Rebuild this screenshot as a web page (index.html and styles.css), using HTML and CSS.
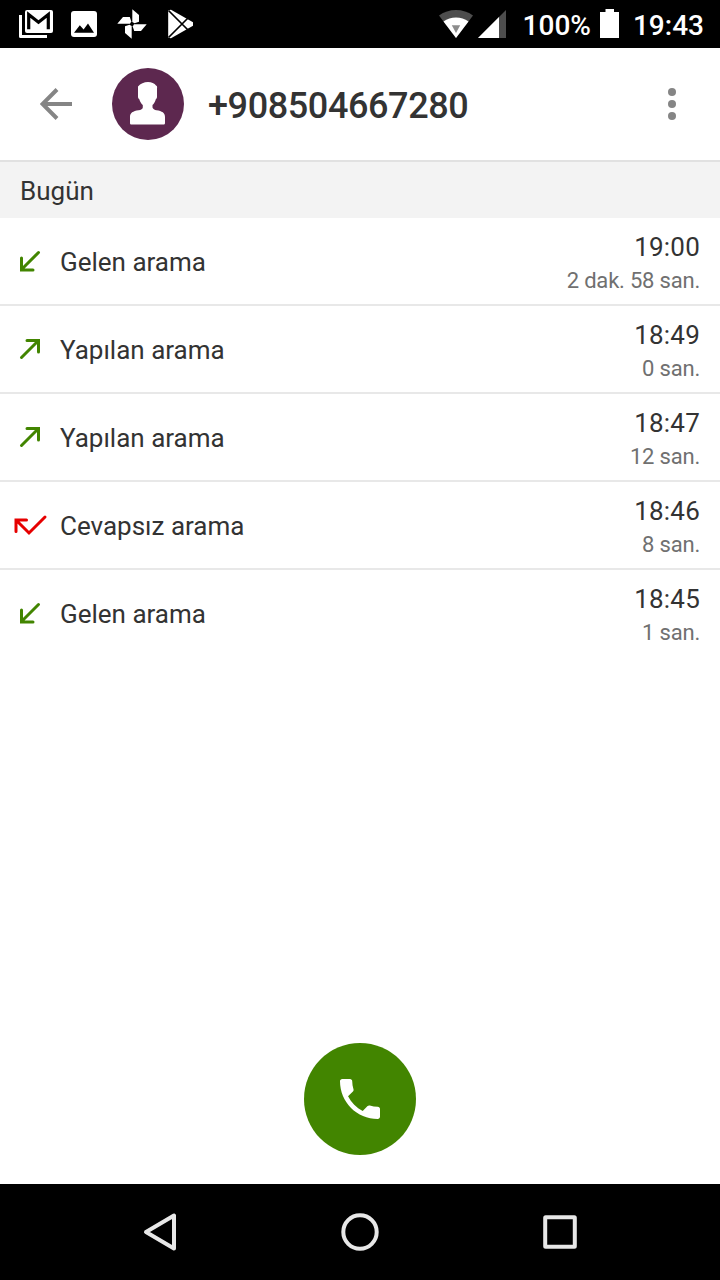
FILE: index.html
```html
<!DOCTYPE html>
<html lang="tr">
<head>
    <meta charset="UTF-8">
    <title>Arama geçmişi</title>
    <link rel="stylesheet" href="styles.css">
</head>
<body>
    <div class="status-bar">
        <div class="notifications">
            <svg width="48" height="48" viewBox="0 0 48 48">
                <path d="M8.5 15V36.5H35" fill="none" stroke="#fff" stroke-width="3" stroke-linejoin="round"/>
                <rect x="13" y="10" width="28" height="23" rx="2" fill="#fff"/>
                <path d="M16.7 29.3V14.6L26.5 22.2L36.3 14.6V29.3" fill="none" stroke="#000" stroke-width="3.2"/>
            </svg>
            <svg width="48" height="48" viewBox="0 0 48 48">
                <rect x="11" y="11" width="26" height="26" rx="3" fill="#fff"/>
                <path d="M14 32.7L19.8 25.3L23.6 29.6L28 23.5L34 32.7Z" fill="#000"/>
            </svg>
            <svg width="48" height="48" viewBox="0 0 48 48" fill="#fff">
                <path d="M24.3 9.3L31 15V21.8L26.5 23.3L24.3 22Z"/>
                <path d="M38.7 24.3L33 31H26.2L24.7 26.5L26 24.3Z"/>
                <path d="M23.7 38.7L17 33V26.2L21.5 24.7L23.7 26Z"/>
                <path d="M9.3 23.7L15 17H21.8L23.3 21.5L22 23.7Z"/>
            </svg>
            <svg width="48" height="48" viewBox="0 0 48 48">
                <path d="M12.2 10.2L15 9.8L37 22.3V25.7L15 38.2L12.2 37.8Z" fill="#fff"/>
                <path d="M12.5 10.5L32 30M12.5 37.5L32 18" stroke="#000" stroke-width="1.7"/>
            </svg>
        </div>
        <div class="system">
            <svg class="wifi" width="34" height="48" viewBox="0 0 34 48">
                <path d="M17 38L0 15.5Q7.5 10 17 10T34 15.5Z" fill="#4d4d4d"/>
                <path d="M17 38L4.5 21.5Q10 17.4 17 17.4T29.5 21.5Z" fill="#fff"/>
                <path d="M12.8 25.2H21.2L17 33Z" fill="#8c8c8c"/>
            </svg>
            <svg class="signal" width="28" height="48" viewBox="0 0 28 48">
                <path d="M28 10V38H0Z" fill="#4d4d4d"/>
                <path d="M21 17V38H0Z" fill="#fff"/>
            </svg>
            <span class="percent">100%</span>
            <svg class="battery" width="20" height="48" viewBox="0 0 20 48">
                <path d="M5.5 9H14V12H19V38H0V12H5.5Z" fill="#fff"/>
            </svg>
            <span class="clock">19:43</span>
        </div>
    </div>

    <header>
        <svg class="back" width="32" height="32" viewBox="0 0 32 32">
            <path d="M32 16H3M17 1.5L2.5 16L17 30.5" fill="none" stroke="#858585" stroke-width="4"/>
        </svg>
        <div class="avatar">
            <svg width="72" height="72" viewBox="0 0 72 72">
                <path d="M36 14C39.5 14 42.5 15.2 44 17.5C45.3 17.8 45.2 19 45 20.5V28.5C45 30 44.6 30.6 43.8 31.2C43.2 33.5 42 35.6 40.5 37V39.5C41 41 42.5 42 44.5 42.3C50 43.2 53 44.8 53 49V55C53 56 52.4 56.6 51.4 56.6H19.6C18.6 56.6 18 56 18 55V49C18 44.8 21 43.2 26.5 42.3C29 41.9 30.8 41 30.8 39.5V37C29.3 35.6 28 33.5 27.3 31.2C26.5 30.6 26 30 26 28.5V18.5C28.5 15.5 32 14 36 14Z" fill="#fff"/>
            </svg>
        </div>
        <h1>+908504667280</h1>
        <svg class="menu" width="8" height="32" viewBox="0 0 8 32" fill="#858585">
            <circle cx="4" cy="4" r="4"/>
            <circle cx="4" cy="16" r="4"/>
            <circle cx="4" cy="28" r="4"/>
        </svg>
    </header>

    <main>
        <h2>Bugün</h2>
        <ul class="calls">
            <li>
                <svg class="incoming" viewBox="0 0 60 48"><path d="M38.5 15.5L22 32M21.5 21V33H33"/></svg>
                <span class="type">Gelen arama</span>
                <div class="info"><span class="time">19:00</span><span class="duration">2 dak. 58 san.</span></div>
            </li>
            <li>
                <svg class="outgoing" viewBox="0 0 60 48"><path d="M21.5 32.5L38 16M27 15.5H38.5V27"/></svg>
                <span class="type">Yapılan arama</span>
                <div class="info"><span class="time">18:49</span><span class="duration">0 san.</span></div>
            </li>
            <li>
                <svg class="outgoing" viewBox="0 0 60 48"><path d="M21.5 32.5L38 16M27 15.5H38.5V27"/></svg>
                <span class="type">Yapılan arama</span>
                <div class="info"><span class="time">18:47</span><span class="duration">12 san.</span></div>
            </li>
            <li>
                <svg class="missed" viewBox="0 0 60 48"><path d="M45 16L29 32L16.5 19.5M16 30.5V19H26.5"/></svg>
                <span class="type">Cevapsız arama</span>
                <div class="info"><span class="time">18:46</span><span class="duration">8 san.</span></div>
            </li>
            <li>
                <svg class="incoming" viewBox="0 0 60 48"><path d="M38.5 15.5L22 32M21.5 21V33H33"/></svg>
                <span class="type">Gelen arama</span>
                <div class="info"><span class="time">18:45</span><span class="duration">1 san.</span></div>
            </li>
        </ul>
    </main>

    <div class="call-area">
        <button class="call-button">
            <svg width="40" height="40" viewBox="3 3 18 18">
                <path d="M6.62 10.79c1.44 2.83 3.76 5.14 6.59 6.59l2.2-2.2c.27-.27.67-.36 1.02-.24 1.12.37 2.33.57 3.57.57.55 0 1 .45 1 1V20c0 .55-.45 1-1 1-9.39 0-17-7.61-17-17 0-.55.45-1 1-1h3.5c.55 0 1 .45 1 1 0 1.25.2 2.45.57 3.57.11.35.03.74-.25 1.02l-2.2 2.2z" fill="#fff"/>
            </svg>
        </button>
    </div>

    <nav>
        <svg width="40" height="40" viewBox="0 0 40 40"><path d="M34 3.5V36.5L6 20Z"/></svg>
        <svg width="40" height="40" viewBox="0 0 40 40"><circle cx="20" cy="20" r="16.7"/></svg>
        <svg width="40" height="40" viewBox="0 0 40 40"><rect x="5.2" y="5.2" width="29.6" height="29.6" rx="0.5"/></svg>
    </nav>
</body>
</html>
```
FILE: styles.css
```css
* {
    box-sizing: border-box;
}
body {
    display: flex;
    flex-direction: column;
    height: 1280px;
    margin: 0;
    background-color: #fff;
    color: #333;
    font-family: Roboto, sans-serif;
}
svg {
    display: block;
    flex-shrink: 0;
}
.status-bar {
    display: flex;
    justify-content: space-between;
    height: 48px;
    padding: 0 16px 0 12px;
    background-color: #000;
    color: #fff;
}
.notifications, .system {
    display: flex;
    align-items: center;
}
.system {
    font-size: 28px;
    font-weight: 500;
    line-height: 44px;
}
.percent, .clock {
    padding-top: 4px;
}
.wifi {
    margin-right: 5px;
}
.signal {
    margin-right: 17px;
}
.battery {
    margin: 0 13px 0 9px;
}
header {
    display: flex;
    align-items: center;
    height: 114px;
    padding: 0 44px 0 40px;
    border-bottom: 2px solid #e1e1e1;
}
.avatar {
    width: 72px;
    height: 72px;
    margin: 0 24px 0 40px;
    border-radius: 50%;
    background-color: #5d284f;
}
h1 {
    flex: 1;
    margin: 0;
    padding-top: 4px;
    font-size: 36px;
    font-weight: 500;
    line-height: 42px;
    letter-spacing: -0.4px;
}
h2 {
    height: 56px;
    margin: 0;
    padding-left: 20px;
    background-color: #f3f3f3;
    font-size: 26px;
    font-weight: 400;
    line-height: 58px;
}
.calls {
    margin: 0;
    padding: 0;
    list-style: none;
}
.calls li {
    display: flex;
    align-items: center;
    height: 88px;
    padding-right: 20px;
    border-bottom: 2px solid #e8e8e8;
}
.calls li:last-child {
    border-bottom: none;
    height: 86px;
}
.calls svg {
    width: 60px;
    height: 48px;
    fill: none;
    stroke-width: 3;
    stroke-linecap: round;
}
.incoming, .outgoing {
    stroke: #428500;
}
.missed {
    stroke: #e60000;
}
.type {
    flex: 1;
    padding-top: 2px;
    font-size: 26px;
    line-height: 32px;
}
.info {
    display: flex;
    flex-direction: column;
    padding-top: 6px;
    text-align: right;
}
.time {
    font-size: 26px;
    line-height: 34px;
    letter-spacing: 0.2px;
}
.duration {
    color: #707070;
    font-size: 22px;
    line-height: 34px;
    letter-spacing: -0.2px;
}
.call-area {
    display: flex;
    justify-content: center;
    margin-top: auto;
    padding-bottom: 29px;
}
.call-button {
    display: flex;
    align-items: center;
    justify-content: center;
    width: 112px;
    height: 112px;
    padding: 0;
    border: none;
    border-radius: 50%;
    background-color: #428500;
}
nav {
    display: flex;
    justify-content: center;
    align-items: center;
    gap: 160px;
    height: 96px;
    background-color: #000;
}
nav svg {
    fill: none;
    stroke: #e8e8e8;
    stroke-width: 4;
    stroke-linejoin: round;
}
```
